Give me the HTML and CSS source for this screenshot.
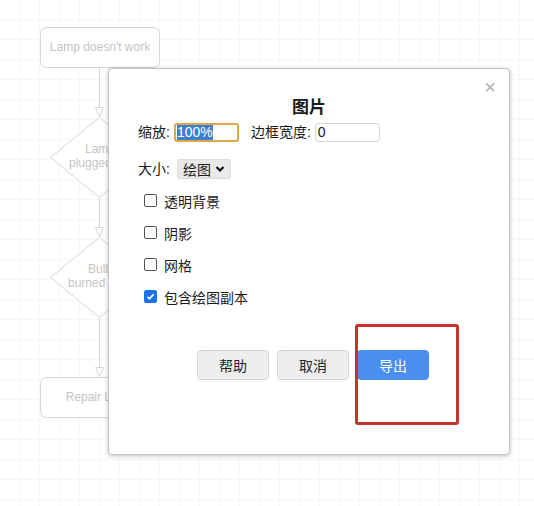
FILE: index.html
```html
<!DOCTYPE html>
<html>
<head>
<meta charset="utf-8">
<link rel="stylesheet" href="styles.css">
</head>
<body>
<div class="canvas">
  <svg class="diagram" width="534" height="506" viewBox="0 0 534 506">
    <defs>
      <pattern id="grid" width="20" height="20" patternUnits="userSpaceOnUse">
        <path d="M19.5 0V20M0 19.5H20" fill="none" stroke="#f7f7f7" stroke-width="1"/>
      </pattern>
    </defs>
    <rect width="534" height="506" fill="url(#grid)"/>
    <g fill="#fff" stroke="#d6d6d6" stroke-width="1">
      <rect x="40.5" y="27.5" width="119" height="40" rx="6"/>
      <path d="M99.5 67.5V107"/>
      <path d="M95.5 107.5H103.5L99.5 116.5Z"/>
      <path d="M99.5 117.5L149.5 157.5L99.5 197.5L50.5 157.5Z"/>
      <path d="M99.5 197.5V227"/>
      <path d="M95.5 227.5H103.5L99.5 236.5Z"/>
      <path d="M99.5 237.5L149.5 277.5L99.5 317.5L50.5 277.5Z"/>
      <path d="M99.5 317.5V367"/>
      <path d="M95.5 367.5H103.5L99.5 376.5Z"/>
      <rect x="40.5" y="377.5" width="119" height="40" rx="6"/>
    </g>
    <g class="dtext" text-anchor="middle">
      <text x="100" y="51">Lamp doesn't work</text>
      <text x="100" y="153">Lamp</text>
      <text x="100" y="167">plugged in?</text>
      <text x="100" y="273">Bulb</text>
      <text x="100" y="287">burned out?</text>
      <text x="100" y="401">Repair Lamp</text>
    </g>
  </svg>

  <div class="dialog">
    <div class="close">×</div>
    <div class="title">图片</div>
    <div class="row row-zoom">
      <span class="lbl">缩放:</span>
      <div class="input focused"><span class="sel">100%</span></div>
      <span class="lbl lbl-border">边框宽度:</span>
      <div class="input">0</div>
    </div>
    <div class="row row-size">
      <span class="lbl">大小:</span>
      <div class="select">绘图
        <svg class="chev" width="10" height="8" viewBox="0 0 10 8"><path d="M1.5 2L5 5.5L8.5 2" fill="none" stroke="#111" stroke-width="2.2"/></svg>
      </div>
    </div>
    <div class="checks">
      <label class="check"><span class="box"></span>透明背景</label>
      <label class="check"><span class="box"></span>阴影</label>
      <label class="check"><span class="box"></span>网格</label>
      <label class="check"><span class="box on"><svg width="13" height="13" viewBox="0 0 13 13"><path d="M3 6.8L5.4 9.2L10 4" fill="none" stroke="#fff" stroke-width="2"/></svg></span>包含绘图副本</label>
    </div>
    <div class="buttons">
      <div class="btn">帮助</div>
      <div class="btn">取消</div>
      <div class="btn primary">导出</div>
    </div>
  </div>
  <div class="highlight"></div>
</div>
</body>
</html>
```

FILE: styles.css
```css
html, body {
  margin: 0;
  padding: 0;
  background: #fff;
}
body {
  font-family: "Liberation Sans", "Noto Sans CJK SC", sans-serif;
  color: #1a1a1a;
}
.canvas {
  position: relative;
  width: 534px;
  height: 506px;
  overflow: hidden;
}
.diagram {
  position: absolute;
  left: 0;
  top: 0;
}
.dtext text {
  font-family: "Liberation Sans", sans-serif;
  font-size: 12px;
  fill: #c4c4c4;
}
.dialog {
  position: absolute;
  left: 108px;
  top: 68px;
  width: 400px;
  height: 385px;
  background: #fff;
  border: 1px solid #c6c6c6;
  border-radius: 4px;
  box-shadow: 0 1px 4px rgba(0,0,0,0.25);
  box-sizing: content-box;
  font-size: 14px;
}
.close {
  position: absolute;
  right: 13px;
  top: 8px;
  font-size: 20px;
  color: #b0b0b0;
  line-height: 20px;
}
.title {
  margin-top: 28px;
  text-align: center;
  font-size: 17px;
  font-weight: bold;
  line-height: 22px;
}
.row {
  display: flex;
  align-items: center;
  padding-left: 29px;
}
.row-zoom {
  height: 20px;
  margin-top: 3px;
}
.lbl {
  line-height: 18px;
}
.input {
  box-sizing: border-box;
  width: 65px;
  height: 19px;
  border: 1px solid #d8d8d8;
  border-radius: 3px;
  margin-left: 4px;
  padding: 0 2px;
  font-size: 14px;
  line-height: 16px;
  display: flex;
  align-items: center;
}
.input.focused {
  border: 2px solid #d9a94a;
  padding: 0 1px;
}
.sel {
  background: #3d7fd1;
  color: #fff;
  line-height: 15px;
}
.lbl-border {
  margin-left: 12px;
}
.row-size {
  margin-top: 17px;
}
.select {
  box-sizing: border-box;
  margin-left: 7px;
  height: 20px;
  padding: 0 5px 0 5px;
  background: #e9e9e9;
  border: 1px solid #dcdcdc;
  border-radius: 3px;
  display: flex;
  align-items: center;
  gap: 4px;
}
.chev {
  display: block;
}
.checks {
  display: flex;
  flex-direction: column;
  gap: 13px;
  margin-top: 12px;
  padding-left: 35px;
}
.check {
  display: flex;
  align-items: center;
  gap: 7px;
  height: 19px;
}
.box {
  box-sizing: border-box;
  width: 13px;
  height: 13px;
  border: 1px solid #555;
  border-radius: 2px;
  display: flex;
  align-items: center;
  justify-content: center;
}
.box.on {
  background: #1a73e8;
  border-color: #1a73e8;
}
.box.on svg {
  display: block;
}
.buttons {
  display: flex;
  gap: 8px;
  margin-top: 44px;
  padding-left: 88px;
}
.btn {
  box-sizing: border-box;
  width: 72px;
  height: 30px;
  border: 1px solid #d4d4d4;
  border-radius: 4px;
  background: #eeeeee;
  display: flex;
  align-items: center;
  justify-content: center;
  color: #222;
}
.btn.primary {
  background: #4a8ef0;
  border-color: #4a8ef0;
  color: #fff;
}
.highlight {
  position: absolute;
  left: 355px;
  top: 324px;
  width: 104px;
  height: 101px;
  box-sizing: border-box;
  border: 3px solid #c8322a;
  border-radius: 3px;
}
```
